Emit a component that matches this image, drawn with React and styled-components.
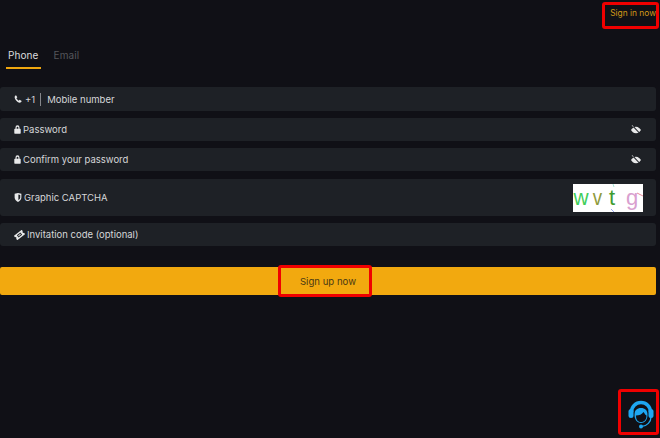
import React from "react";
import styled, { createGlobalStyle } from "styled-components";

const Global = createGlobalStyle`
  html, body { margin: 0; padding: 0; background: #101016; }
  body { font-family: Inter, "Noto Sans", "Liberation Sans", sans-serif; }
`;
const Page = styled.div`
  position: relative; width: 660px; height: 438px; overflow: hidden;
  background: #101016; box-sizing: border-box; padding-right: 4px;
  display: flex; flex-direction: column;
`;
const TopBar = styled.div`
  height: 26px; display: flex; justify-content: flex-end; align-items: center;
`;
const SignIn = styled.a`
  font-size: 8.4px; color: #d29a17; line-height: 12px;
`;
const Tabs = styled.div`
  margin-top: 15px; padding-left: 6px; display: flex; gap: 11px; height: 28px;
`;
const Tab = styled.div`
  font-size: 10px; line-height: 28px; height: 28px; box-sizing: border-box; padding: 0 2px;
  color: ${p => (p.$active ? "#dcdcde" : "#55565b")};
  border-bottom: ${p => (p.$active ? "2px solid #f0a70f" : "none")};
  letter-spacing: 0.1px;
`;
const Form = styled.div`
  margin-top: 18px; display: flex; flex-direction: column; gap: 7px;
`;
const Row = styled.div`
  height: ${p => p.$h || 23}px; background: #1e2126; border-radius: 3px;
  display: flex; align-items: center; padding: 0 15px 0 14px; box-sizing: border-box;
  color: #d6d7d9; font-size: 9.5px; gap: 2px;
  margin-top: ${p => p.$mt || 0}px;
`;
const Label = styled.span`flex: 1; line-height: 12px; padding-top: 1px;`;
const Prefix = styled.span`margin: 0 3px 0 1px; padding-top: 1px;`;
const Divider = styled.span`width: 1px; height: 13px; background: #85878b; margin: 0 4px 0 0;`;
const Captcha = styled.div`
  position: relative; width: 70px; height: 28px; background: #fff; margin-right: -2px;
  display: flex; align-items: flex-end; box-sizing: border-box; overflow: hidden;
  padding-bottom: 1px;
  font-family: "Liberation Sans", sans-serif; font-size: 22px; line-height: 27px;
`;
const Ch = styled.span`
  color: ${p => p.$c}; margin-left: ${p => p.$ml || 0}px;
  transform: scaleX(${p => p.$sx || 1});
`;
const Noise = styled.svg`position: absolute; left: 0; top: 0;`;
const Submit = styled.button`
  margin: 21px 0 0; height: 28px; width: 100%; border: 0; border-radius: 2px;
  background: #f2a90f; color: #4a3a14; font: 9.6px Inter, "Liberation Sans", sans-serif; padding: 0;
`;
const Mark = styled.div`
  position: absolute; border: 3px solid #f00000; border-radius: 3px; box-sizing: border-box;
  left: ${p => p.$x}px; top: ${p => p.$y}px; width: ${p => p.$w}px; height: ${p => p.$h}px;
`;
const Support = styled.svg`position: absolute; left: 628px; top: 400px;`;
const Ico = styled.svg`flex: none; fill: #e8e9ea;`;

const Phone = () => (
  <Ico width="8" height="8" viewBox="0 0 24 24"><path d="M6 1l4 6-3 3c1.500 3 4 5.500 7 7l3-3 6 4c-1 3-3 5-6 5C9 22 2 13 2 6c0-2 2-4 4-5z" /></Ico>
);
const Lock = () => (
  <Ico width="7" height="9" viewBox="0 0 24 26" preserveAspectRatio="none"><path fillRule="evenodd" d="M5 11V8a7 7 0 0 1 14 0v3h2a2 2 0 0 1 2 2v10a2 2 0 0 1-2 2H3a2 2 0 0 1-2-2V13a2 2 0 0 1 2-2zm4 0h6V8a3 3 0 0 0-6 0z" /></Ico>
);
const Shield = () => (
  <Ico width="8" height="9" viewBox="0 0 20 24"><path fillRule="evenodd" d="M1 2l9-2 9 2v10c0 6-5 10-9 12-4-2-9-6-9-12zM11 4v15c3-2 5-4 5-7V5z" /></Ico>
);
const Ticket = () => (
  <Ico width="11" height="10" viewBox="0 0 24 22">
    <g transform="rotate(-38 12 11)">
      <path fillRule="evenodd" d="M1 5h22v4a2 2 0 0 0 0 4v4H1v-4a2 2 0 0 0 0-4zM7 8v6h10V8zM9 10h6v2H9z" />
    </g>
  </Ico>
);
const EyeOff = () => (
  <Ico width="10" height="10" viewBox="0 0 24 24">
    <path d="M12 4C6 4 2 9 0 12c2 3 6 8 12 8s10-5 12-8c-2-3-6-8-12-8z" />
    <path d="M4 2l18 19" stroke="#1e2126" strokeWidth="2.600" />
    <path d="M2 1l4 3" stroke="#e8e9ea" strokeWidth="2" />
  </Ico>
);

export default function App() {
  return (
    <Page>
      <Global />
      <TopBar><SignIn>Sign in now</SignIn></TopBar>
      <Tabs>
        <Tab $active>Phone</Tab>
        <Tab>Email</Tab>
      </Tabs>
      <Form>
        <Row $h={24}><Phone /><Prefix>+1</Prefix><Divider /><Label>Mobile number</Label></Row>
        <Row><Lock /><Label>Password</Label><EyeOff /></Row>
        <Row><Lock /><Label>Confirm your password</Label><EyeOff /></Row>
        <Row $h={37} $mt={1}>
          <Shield /><Label>Graphic CAPTCHA</Label>
          <Captcha>
            <Ch $c="#3fce5a" $sx={0.95}>w</Ch>
            <Ch $c="#8f9a3c" $ml={3} $sx={0.85}>v</Ch>
            <Ch $c="#3f9c2f" $ml={6}>t</Ch>
            <Ch $c="#d9a0cf" $ml={11}>g</Ch>
            <Noise width="70" height="28" viewBox="0 0 70 28">
              <path d="M64 9l6 3" stroke="#e88a9a" strokeWidth="1" fill="none" />
              <path d="M40 0l1 3" stroke="#a8e6d8" strokeWidth="1" fill="none" />
              <path d="M38 25l3 3" stroke="#9aa8f0" strokeWidth="1" fill="none" />
            </Noise>
          </Captcha>
        </Row>
        <Row><Ticket /><Label>Invitation code (optional)</Label></Row>
      </Form>
      <Submit>Sign up now</Submit>
      <Mark $x={602} $y={2} $w={57} $h={27} />
      <Mark $x={278} $y={265} $w={94} $h={32} />
      <Mark $x={618} $y={389} $w={41} $h={46} />
      <Support width="26" height="29" viewBox="0 0 26 29">
        <path d="M3.500 12A9.500 9.500 0 0 1 22.500 12" stroke="#1ea7f2" strokeWidth="3.500" fill="none" />
        <rect x="0.500" y="9" width="5" height="9" rx="2.500" fill="#1ea7f2" />
        <rect x="20.500" y="9" width="5" height="9" rx="2.500" fill="#1ea7f2" />
        <path d="M6.500 15C6.500 10 9 8 13 8s6.500 2 6.500 7c0 5-3 8-6.500 8s-6.500-3-6.500-8z" fill="#1ea7f2" />
        <path d="M8 15.500c3 0 6-1 7.500-3.500 1 1.500 2 3 3 3.500 0 4-2 6.500-5.500 6.500S8 19.500 8 15.500z" fill="#101016" />
        <path d="M23 17c0 5-4 9-9 9.300" stroke="#1ea7f2" strokeWidth="1.300" fill="none" />
        <circle cx="13" cy="26.500" r="2" fill="#1ea7f2" />
      </Support>
    </Page>
  );
}
